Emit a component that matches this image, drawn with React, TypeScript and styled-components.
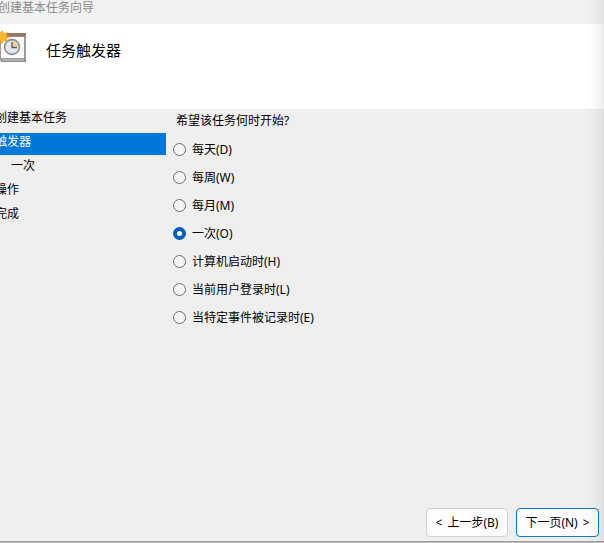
import React, { useState } from "react";
import styled, { createGlobalStyle } from "styled-components";

const GlobalStyle = createGlobalStyle`
  * {
    box-sizing: border-box;
  }
  body {
    margin: 0;
    background: #efefef;
    color: #000;
    font: 12px/18px "Noto Sans", "Noto Sans CJK SC", sans-serif;
  }
`;

const Window = styled.div`
  position: relative;
  display: flex;
  flex-direction: column;
  min-height: 100vh;
  overflow: hidden;
  background: #efefef;
  border-bottom: 1px solid #bcbcbc;
  box-shadow: inset 0 -1px #9c9c9c;
`;

/* Soft shade that falls along the right edge of the window. */
const EdgeShade = styled.div`
  position: absolute;
  inset: 0 0 0 auto;
  width: 20px;
  pointer-events: none;
  background: linear-gradient(to right, rgba(0, 0, 0, 0), rgba(0, 0, 0, 0.02) 50%, rgba(0, 0, 0, 0.07));
`;

const TitleBar = styled.header`
  height: 24px;
  margin-left: -2px;
  line-height: 16px;
  color: #8c8c8c;
  background: #f2f2f2;
`;

const Banner = styled.div`
  display: flex;
  align-items: flex-start;
  gap: 18px;
  min-height: 85px;
  padding-top: 6px;
  background: #fff;
`;

const Heading = styled.h1`
  margin: 8px 0 0;
  font-size: 15px;
  font-weight: 400;
  line-height: 24px;
`;

const Body = styled.main`
  display: flex;
  flex: 1;
`;

const Steps = styled.ol`
  display: flex;
  flex-direction: column;
  gap: 2px;
  width: 171px;
  margin: 0 0 0 -5px;
  padding: 0;
  list-style: none;
`;

const Step = styled.li<{ $current?: boolean; $nested?: boolean }>`
  height: 22px;
  padding-left: ${(p) => (p.$nested ? "16px" : "0")};
  color: ${(p) => (p.$current ? "#fff" : "#000")};
  background: ${(p) => (p.$current ? "#0078d7" : "transparent")};
`;

const Triggers = styled.fieldset`
  flex: 1;
  min-width: 0;
  margin: 0;
  padding: 3px 7px 0;
  border: 0;
`;

const Question = styled.legend`
  float: left;
  width: 100%;
  margin-bottom: 5px;
  padding: 0 3px;
`;

const Option = styled.label`
  display: flex;
  clear: both;
  align-items: center;
  gap: 6px;
  height: 28px;
`;

const OptionText = styled.span`
  padding-top: 2px;
`;

const Radio = styled.input`
  appearance: none;
  flex: none;
  width: 13px;
  height: 13px;
  margin: 0;
  border: 1px solid #6e6e6e;
  border-radius: 50%;
  background: #f5f5f5;

  &:checked {
    border: 4px solid #005fb8;
    background: #fff;
  }
`;

const Footer = styled.footer`
  display: flex;
  justify-content: flex-end;
  gap: 8px;
  padding: 0 5px 5px;
`;

const Button = styled.button<{ $primary?: boolean }>`
  display: flex;
  align-items: center;
  justify-content: center;
  gap: 5px;
  width: ${(p) => (p.$primary ? "83px" : "82px")};
  height: 29px;
  padding: 0;
  border: 1px solid ${(p) => (p.$primary ? "#0078d4" : "#d0d0d0")};
  border-radius: 4px;
  background: #fdfdfd;
  color: #000;
  font: inherit;
  white-space: nowrap;
`;

const TaskIcon = () => (
  <svg width="28" height="36" viewBox="0 0 28 36" aria-hidden="true">
    <path d="M0 29H2V7H26V32H1Z" fill="#8f8b8b" />
    <path d="M2 29.5H24V30.5H2Z" fill="#d8d8d8" />
    <path d="M0 3H26V29H0Z" fill="#a09a98" />
    <path d="M1 7H24V28H1Z" fill="#fafafa" />
    <path d="M4 3H26V6.5H4Z" fill="#9a7564" />
    <circle cx="12" cy="17" r="8.2" fill="#858b96" />
    <circle cx="12" cy="17" r="6.6" fill="#e4e8ee" />
    <path d="M12 17V11A6 6 0 0 1 18 17Z" fill="#f3d18c" />
    <path d="M12 12V17.5H17" fill="none" stroke="#59616d" strokeWidth="1.4" />
    <path
      d="M2 0L3.5 3.5L8 2L6.5 5.5L10 7L6.5 8.5L8 12L3.5 10.5L2 14L-1 11L-4 6L0 3Z"
      fill="#f8a51b"
    />
    <circle cx="2" cy="7" r="4" fill="#ffb92e" />
  </svg>
);

const steps = [
  { label: "创建基本任务" },
  { label: "触发器", current: true },
  { label: "一次", nested: true },
  { label: "操作" },
  { label: "完成" },
];

const triggers = [
  "每天(D)",
  "每周(W)",
  "每月(M)",
  "一次(O)",
  "计算机启动时(H)",
  "当前用户登录时(L)",
  "当特定事件被记录时(E)",
];

export default function App() {
  const [selected, setSelected] = useState("一次(O)");

  return (
    <Window>
      <GlobalStyle />
      <TitleBar>创建基本任务向导</TitleBar>
      <Banner>
        <TaskIcon />
        <Heading>任务触发器</Heading>
      </Banner>
      <Body>
        <Steps>
          {steps.map((s) => (
            <Step
              key={s.label}
              $current={s.current}
              $nested={s.nested}
              aria-current={s.current ? "step" : undefined}
            >
              {s.label}
            </Step>
          ))}
        </Steps>
        <Triggers>
          <Question>希望该任务何时开始?</Question>
          {triggers.map((label) => (
            <Option key={label}>
              <Radio
                type="radio"
                name="trigger"
                value={label}
                checked={selected === label}
                onChange={() => setSelected(label)}
              />
              <OptionText>{label}</OptionText>
            </Option>
          ))}
        </Triggers>
      </Body>
      <Footer>
        <Button type="button">
          <span>&lt;</span>
          <span>上一步(B)</span>
        </Button>
        <Button type="button" $primary>
          <span>下一页(N)</span>
          <span>&gt;</span>
        </Button>
      </Footer>
      <EdgeShade />
    </Window>
  );
}
